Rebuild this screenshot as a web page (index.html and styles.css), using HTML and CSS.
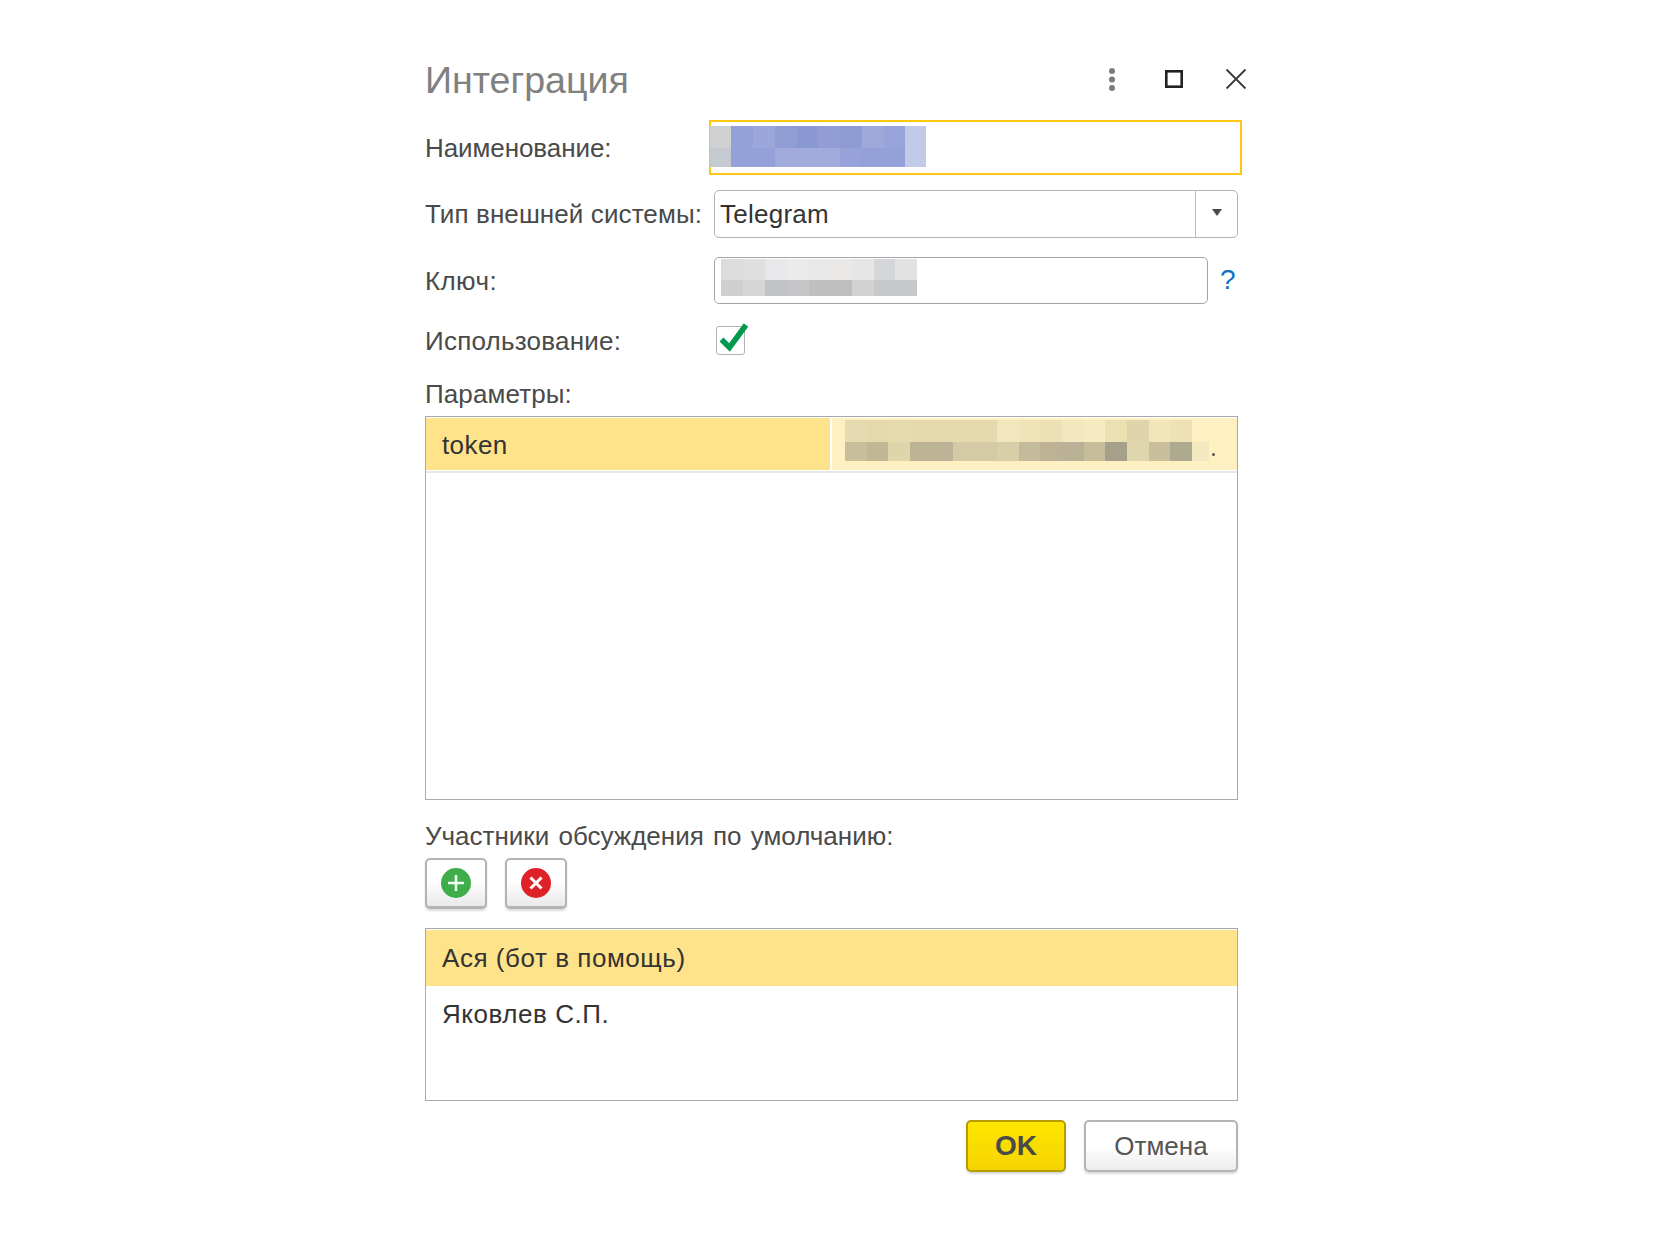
FILE: index.html
```html
<!DOCTYPE html>
<html lang="ru">
<head>
<meta charset="utf-8">
<title>Интеграция</title>
<link rel="stylesheet" href="styles.css">
</head>
<body>
<main class="dialog">
  <header class="title-row">
    <h1 class="title">Интеграция</h1>
    <div class="window-tools">
      <svg class="tool" width="20" height="30" viewBox="0 0 20 30"><circle cx="10" cy="6" r="3" fill="#7c7c7c"/><circle cx="10" cy="14.500" r="3" fill="#7c7c7c"/><circle cx="10" cy="23" r="3" fill="#7c7c7c"/></svg>
      <svg class="tool" width="20" height="30" viewBox="0 0 20 30"><rect x="2.300" y="6.300" width="15.400" height="15.400" fill="none" stroke="#222" stroke-width="2.600"/></svg>
      <svg class="tool" width="22" height="30" viewBox="0 0 22 30"><path d="M1.500 4.500 L20.500 23.500 M20.500 4.500 L1.500 23.500" fill="none" stroke="#3a3a3a" stroke-width="1.800"/></svg>
    </div>
  </header>

  <div class="row row-name">
    <label class="label label-name">Наименование:</label>
    <div class="name-field"><div class="blur blur-name"></div></div>
  </div>

  <div class="row row-type">
    <label class="label label-type">Тип внешней системы:</label>
    <div class="select">
      <span class="select-value">Telegram</span>
      <span class="select-btn"><svg width="10" height="7" viewBox="0 0 10 7"><path d="M0 0 H10 L5 7 Z" fill="#4a4a4a"/></svg></span>
    </div>
  </div>

  <div class="row row-key">
    <label class="label label-key">Ключ:</label>
    <div class="key-field"><div class="blur blur-key"></div></div>
    <span class="help">?</span>
  </div>

  <div class="row row-use">
    <label class="label label-use">Использование:</label>
    <span class="checkbox">
      <svg class="check" width="32" height="32" viewBox="0 0 32 32"><path d="M4.500 17.500 L12.500 25.500 L29 3" fill="none" stroke="#009a4e" stroke-width="5.500"/></svg>
    </span>
  </div>

  <div class="section-label section-params">Параметры:</div>
  <section class="table table-params">
    <div class="param-row">
      <div class="param-name">token</div>
      <div class="param-value"><div class="blur blur-token"></div><span class="dot"></span></div>
    </div>
  </section>

  <div class="section-label section-members">Участники обсуждения по умолчанию:</div>
  <div class="toolbar">
    <button class="icon-btn" type="button"><svg width="32" height="32" viewBox="0 0 32 32"><circle cx="16" cy="16" r="15" fill="#3fae4a"/><path d="M16 8 V24 M8 16 H24" stroke="#f4fff4" stroke-width="2.600"/></svg></button>
    <button class="icon-btn" type="button"><svg width="32" height="32" viewBox="0 0 32 32"><circle cx="16" cy="16" r="15" fill="#df2128"/><path d="M10.500 10.500 L21.500 21.500 M21.500 10.500 L10.500 21.500" stroke="#fff" stroke-width="3"/></svg></button>
  </div>

  <section class="table table-members">
    <div class="member member-active">Ася (бот в помощь)</div>
    <div class="member">Яковлев С.П.</div>
  </section>

  <footer class="actions">
    <button class="btn btn-ok" type="button">OK</button>
    <button class="btn btn-cancel" type="button">Отмена</button>
  </footer>
</main>
</body>
</html>
```

FILE: styles.css
```css
* { box-sizing: border-box; }
html, body { margin: 0; background: #fff; }
body { font-family: "Liberation Sans", Arial, sans-serif; font-size: 26px; color: #4a4a4a; height: 1233px; overflow: hidden; }

.dialog { width: 813px; margin-left: 425px; padding-top: 60px; }

.title-row { display: flex; justify-content: space-between; align-items: flex-start; height: 60px; margin-right: -9px; }
.title { margin: 0; font-size: 37.600px; font-weight: 400; line-height: 41px; color: #808080; }
.window-tools { display: flex; padding-top: 5px; }
.tool { display: block; margin-left: 42px; }
.tool:first-child { margin-left: 0; }
.tool:last-child { margin-left: 41.500px; }

.row { display: flex; align-items: center; }
.label { width: 284px; flex: none; line-height: 30px; white-space: nowrap; }
.label-name { letter-spacing: -.08px; }
.label-type { letter-spacing: .1px; }
.label-key { letter-spacing: .4px; }
.label-use { letter-spacing: .23px; }

.row-name { height: 55px; margin-right: -4px; }
.name-field { flex: 1; height: 55px; border: 2.500px solid #fdc80f; padding: 3.500px 0 0 0; }

.row-type { height: 48px; margin-top: 15px; }
.select { flex: 1; height: 48px; margin-left: 5px; display: flex; border: 1.500px solid #b4b4b4; border-radius: 5px; color: #333; }
.select-value { flex: 1; padding-left: 5px; line-height: 46px; letter-spacing: .25px; }
.select-btn { width: 42px; border-left: 1.500px solid #b9b9b9; display: flex; align-items: center; justify-content: center; padding-bottom: 3px; }

.row-key { height: 47px; margin-top: 19px; }
.key-field { width: 494px; height: 47px; margin-left: 5px; border: 1.500px solid #a4a4a4; border-radius: 5px; padding: 0 0 0 5.500px; }
.help { margin-left: 12px; font-size: 28px; color: #0a72c0; line-height: 42px; padding-bottom: 2px; }

.row-use { height: 29px; margin-top: 22px; }
.checkbox { width: 29px; height: 29px; margin-left: 7px; border: 1.500px solid #b4b4b4; border-radius: 3px; position: relative; }
.check { position: absolute; left: 0; top: -5px; overflow: visible; }

.blur { background-repeat: no-repeat; }
.blur-name {
  width: 216px; height: 41px; margin-left: -1.500px;
  background-image:
    linear-gradient(90deg, #cfd0d1 21px, #94a0d8 21px 43px, #9ba6da 43px 65px, #909dd5 65px 87px, #8b99d3 87px 108px, #929dd5 108px 130px, #8d9ad3 130px 152px, #9ea9da 152px 174px, #98a4d9 174px 195px, #c2cae9 195px),
    linear-gradient(90deg, #c5c9d0 21px, #94a0d8 21px 65px, #a0abdb 65px 130px, #96a2d8 130px 152px, #94a0d8 152px 195px, #c2cae9 195px);
  background-size: 100% 22px, 100% 19px;
  background-position: 0 0, 0 22px;
}
.blur-key {
  width: 196px; height: 37px; margin-top: .500px;
  background-image:
    linear-gradient(90deg, #dcdcdd 22px, #e0dfde 22px 44px, #e8e8ea 44px 66px, #ebebec 66px 88px, #e9e9ea 88px 110px, #e9e8e6 110px 131px, #e6e6e6 131px 153px, #d5d6d9 153px 174px, #e2e2e3 174px),
    linear-gradient(90deg, #cfcfd0 22px, #d5d5d4 22px 44px, #c2c3c6 44px 66px, #c6c6c8 66px 88px, #bfbfbf 88px 131px, #d3d2d0 131px 153px, #c7c8ca 153px);
  background-size: 100% 21px, 100% 16px;
  background-position: 0 0, 0 21px;
}

.section-label { line-height: 30px; }
.section-params { margin-top: 23.500px; letter-spacing: .1px; }
.section-members { margin-top: 21px; word-spacing: 2px; }

.table { border: 1.500px solid #a9a9a9; }
.table-params { height: 384px; margin-top: 7px; }
.param-row { display: flex; height: 55px; margin-top: 1px; border-bottom: 2px solid #e8e8e8; }
.param-name { width: 404px; padding-left: 16px; background: #ffe38b; color: #333; line-height: 54px; border-bottom: 1px solid #fff; letter-spacing: .4px; }
.param-value { flex: 1; margin-left: 2px; background: #fef0c0; display: flex; padding: 2px 0 0 13px; position: relative; border-bottom: 1px solid #fff; }
.blur-token {
  width: 364px; height: 41px;
  background-image:
    linear-gradient(90deg, #e6dbb0 21.700px, #e4d8ac 21.700px 43.400px, #e6daaf 43.400px 65.100px, #e5d9ad 65.100px 151.900px, #f1e6bc 151.900px 173.600px, #efe3b7 173.600px 195.300px, #ede0b4 195.300px 217px, #f3e8bd 217px 238.700px, #f5eac0 238.700px 260.400px, #ebe0b1 260.400px 282.100px, #dfd4ac 282.100px 303.800px, #f1e5b9 303.800px 325.500px, #ede1b5 325.500px 347.200px, #fef0c0 347.200px),
    linear-gradient(90deg, #c8be9c 21.700px, #c0b795 21.700px 43.400px, #dfd5aa 43.400px 65.100px, #bdb497 65.100px 108.500px, #d4caa5 108.500px 151.900px, #d8cea8 151.900px 173.600px, #c3bb9b 173.600px 195.300px, #bdb294 195.300px 217px, #b9b296 217px 238.700px, #c6bd9a 238.700px 260.400px, #a6a08a 260.400px 282.100px, #e0d6ad 282.100px 303.800px, #c9bf9d 303.800px 325.500px, #aeaa90 325.500px 347.200px, #f3e8bf 347.200px);
  background-size: 100% 22px, 100% 19px;
  background-position: 0 0, 0 22px;
}
.dot { position: absolute; left: 380px; top: 35px; width: 3px; height: 3px; border-radius: 50%; background: #555; }

.toolbar { display: flex; gap: 18px; margin-top: 7px; }
.icon-btn { width: 62px; height: 51px; padding: 0; display: flex; align-items: center; justify-content: center; background: linear-gradient(#ffffff 45%, #e9e9e9); border: 2px solid #b4b4b4; border-bottom-width: 3px; border-radius: 5px; box-shadow: 0 2px 2px #dcdcdc; }

.table-members { height: 173px; margin-top: 19px; }
.member { height: 57px; padding-left: 16px; line-height: 56px; color: #333; letter-spacing: .55px; }
.member-active { background: #ffe38b; margin-top: 1px; height: 56px; }

.actions { display: flex; justify-content: flex-end; gap: 18px; margin-top: 19.500px; }
.btn { height: 52px; padding: 0; font-family: inherit; border-radius: 5px; box-shadow: 0 2px 2px #d9d9d9; }
.btn-ok { width: 100px; font-size: 28px; font-weight: 700; color: #4a4a4a; background: linear-gradient(#ffe600, #f4d400); border: 2.500px solid #b59d00; }
.btn-cancel { width: 154px; font-size: 26px; color: #555; background: linear-gradient(#ffffff 50%, #ececec); border: 2.500px solid #b4b4b4; }
```
